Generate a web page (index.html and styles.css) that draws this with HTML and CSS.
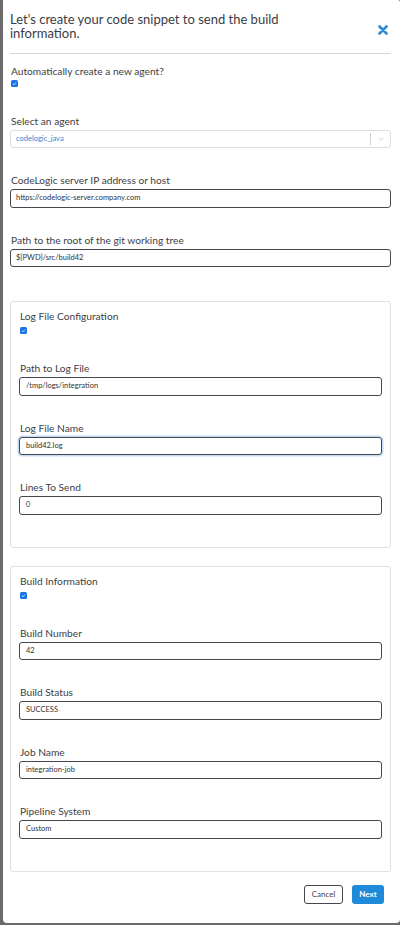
FILE: index.html
```html
<!DOCTYPE html>
<html>
<head>
<meta charset="utf-8">
<link rel="stylesheet" href="styles.css">
</head>
<body>
<div class="modal">
  <div class="header">
    <div class="title">Let's create your code snippet to send the build information.</div>
    <span class="close"><svg width="10" height="10" viewBox="0 0 10 10"><path d="M1.5 1.5 L8.5 8.5 M8.5 1.5 L1.5 8.5" stroke="#2a8ad6" stroke-width="2.6" stroke-linecap="round"/></svg></span>
  </div>

  <div class="toggle-row">
    <div class="label">Automatically create a new agent?</div>
    <span class="check"><svg width="7" height="7" viewBox="0 0 7 7"><path d="M2 3.8 L3 4.7 L5 2.6" stroke="#fff" stroke-width="0.8" fill="none"/></svg></span>
  </div>

  <div class="field">
    <div class="label">Select an agent</div>
    <div class="select">
      <span class="select-value">codelogic_java</span>
      <span class="select-sep"></span>
      <span class="select-arrow"><svg width="6" height="4" viewBox="0 0 6 4"><path d="M0.5 0.8 L3 3.2 L5.5 0.8" stroke="#c8c8c8" stroke-width="0.8" fill="none"/></svg></span>
    </div>
  </div>

  <div class="field">
    <div class="label">CodeLogic server IP address or host</div>
    <div class="input">https://codelogic-server.company.com</div>
  </div>

  <div class="field">
    <div class="label">Path to the root of the git working tree</div>
    <div class="input">${PWD}/src/build42</div>
  </div>

  <div class="card card-first">
    <div class="toggle-row">
      <div class="label">Log File Configuration</div>
      <span class="check"><svg width="7" height="7" viewBox="0 0 7 7"><path d="M2 3.8 L3 4.7 L5 2.6" stroke="#fff" stroke-width="0.8" fill="none"/></svg></span>
    </div>
    <div class="field">
      <div class="label">Path to Log File</div>
      <div class="input">/tmp/logs/integration</div>
    </div>
    <div class="field">
      <div class="label">Log File Name</div>
      <div class="input focused">build42.log</div>
    </div>
    <div class="field">
      <div class="label">Lines To Send</div>
      <div class="input">0</div>
    </div>
  </div>

  <div class="card">
    <div class="toggle-row">
      <div class="label">Build Information</div>
      <span class="check"><svg width="7" height="7" viewBox="0 0 7 7"><path d="M2 3.8 L3 4.7 L5 2.6" stroke="#fff" stroke-width="0.8" fill="none"/></svg></span>
    </div>
    <div class="field">
      <div class="label">Build Number</div>
      <div class="input">42</div>
    </div>
    <div class="field">
      <div class="label">Build Status</div>
      <div class="input">SUCCESS</div>
    </div>
    <div class="field">
      <div class="label">Job Name</div>
      <div class="input">integration-job</div>
    </div>
    <div class="field">
      <div class="label">Pipeline System</div>
      <div class="input">Custom</div>
    </div>
  </div>

  <div class="footer">
    <button class="btn btn-cancel">Cancel</button>
    <button class="btn btn-next">Next</button>
  </div>
</div>
</body>
</html>
```

FILE: styles.css
```css
html, body {
  margin: 0;
  padding: 0;
}
body {
  background: #6b6b6b;
  font-family: Lato, "Open Sans", sans-serif;
  color: #3f3f44;
}
.modal {
  margin-left: 3px;
  background: #fff;
  height: 923px;
  box-sizing: border-box;
  padding: 0 9px 0 7px;
  border-radius: 0 2px 4px 4px;
}
.header {
  display: flex;
  justify-content: space-between;
  align-items: flex-start;
  padding: 12px 0 12px 0;
  border-bottom: 1px solid #d4d6dc;
}
.title {
  font-size: 13px;
  line-height: 14.3px;
  max-width: 310px;
  color: #3c3c42;
}
.close {
  display: flex;
  margin-top: 13px;
  margin-right: 3px;
}
.toggle-row {
  display: flex;
  flex-direction: column;
  align-items: flex-start;
}
.modal > .toggle-row {
  margin-top: 10px;
  margin-bottom: 27px;
  padding-left: 1px;
}
.label {
  font-size: 10.2px;
  line-height: 15px;
  color: #404046;
}
.check {
  display: flex;
  width: 7px;
  height: 7px;
  background: #1b74e8;
  border-radius: 1.5px;
  margin-top: 1px;
}
.card .check {
  margin-top: 3px;
}
.field {
  margin-bottom: 25px;
  display: flex;
  flex-direction: column;
}
.field .label {
  margin-bottom: 1px;
  padding-left: 1px;
}
.input {
  height: 18.5px;
  box-sizing: border-box;
  border: 1px solid #45474c;
  border-radius: 3px;
  font-size: 7.5px;
  line-height: 16.5px;
  padding-left: 5px;
  color: #333;
}
.input.focused {
  box-shadow: 0 0 0 1.5px #c4dcf5;
}
.select {
  height: 18.5px;
  box-sizing: border-box;
  border: 1px solid #dedede;
  border-radius: 3px;
  display: flex;
  align-items: center;
  padding-left: 5px;
}
.select-value {
  flex: 1;
  font-size: 7.5px;
  color: #2a8ad6;
}
.select-sep {
  width: 1px;
  height: 12px;
  background: #d0d0d0;
}
.select-arrow {
  display: flex;
  width: 19px;
  justify-content: center;
  padding-top: 1px;
}
.card {
  border: 1px solid #e0e0e3;
  border-radius: 3px;
  padding: 7px 8px 7px 8px;
  margin-bottom: 13px;
}
.card-first {
  margin-top: 34px;
  margin-bottom: 18px;
}
.card > .toggle-row {
  margin-bottom: 27px;
  padding-left: 1px;
}
.card .field .input {
  padding-left: 6px;
}
.footer {
  display: flex;
  justify-content: flex-end;
  gap: 9px;
  padding-right: 7px;
}
.btn {
  height: 19px;
  box-sizing: border-box;
  border-radius: 3px;
  font-family: Lato, "Open Sans", sans-serif;
  font-size: 8px;
  padding: 0;
  cursor: pointer;
}
.btn-cancel {
  width: 39px;
  background: #fff;
  border: 1px solid #45474c;
  color: #444;
}
.btn-next {
  width: 32px;
  background: #1f8ad8;
  border: none;
  color: #fff;
  font-weight: bold;
}
```
